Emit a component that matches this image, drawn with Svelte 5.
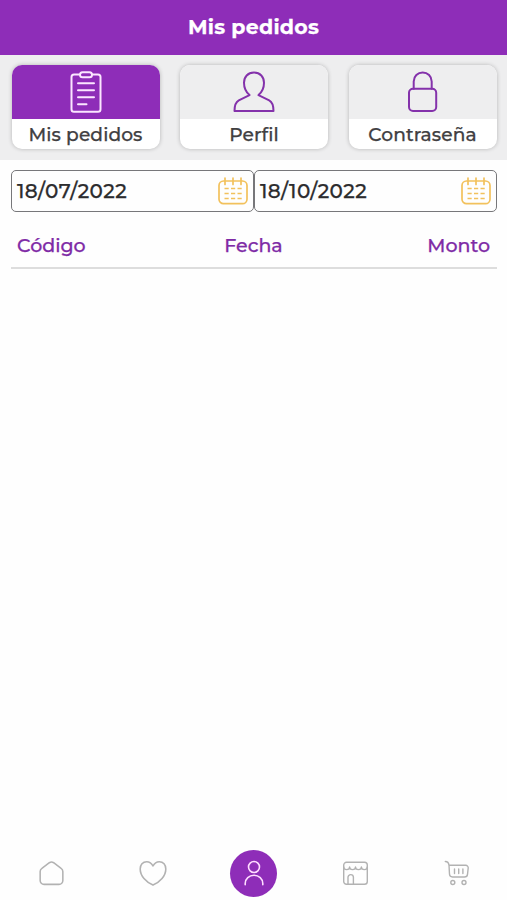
<script lang="ts">
  let activeTab = $state('pedidos');
  let from = $state('18/07/2022');
  let to = $state('18/10/2022');

  const tabs = [
    {id: 'pedidos', label: 'Mis pedidos'},
    {id: 'perfil', label: 'Perfil'},
    {id: 'clave', label: 'Contraseña'},
  ];
  const columns = ['Código', 'Fecha', 'Monto'];
</script>

{#snippet calendar()}
  <svg class="calendar" width="30" height="28" viewBox="0 0 30 28">
    <rect x="1" y="4" width="28" height="22.7" rx="4.5" />
    <path d="M7 1v6.5M15 1v6.5M23 1v6.5" />
    <path class="days" d="M6.5 11.5h4.2M13 11.5h4.2M19.5 11.5h4.2M6.5 16.5h4.2M13 16.5h4.2M19.5 16.5h4.2M6.5 21.5h4.2M13 21.5h4.2M19.5 21.5h4.2" />
  </svg>
{/snippet}

<div class="screen">
  <header><h1>Mis pedidos</h1></header>

  <div class="tabs">
    {#each tabs as tab}
      <button class="tab" class:active={activeTab === tab.id} onclick={() => activeTab = tab.id}>
        <span class="picture">
          <svg width="42" height="42" viewBox="0 0 42 42">
            {#if tab.id === 'pedidos'}
              <path d="M15 3.5H9A2.500 2.500 0 0 0 6.500 6v32.300A2.500 2.500 0 0 0 9 40.800h24a2.500 2.500 0 0 0 2.500-2.500V6A2.500 2.500 0 0 0 33 3.500h-6" />
              <rect x="15" y="1.2" width="12" height="5" rx="2.5" />
              <path d="M13 12.2h16M13 19.2h16M13 26.3h16M13 33.3h8.500" />
            {:else if tab.id === 'perfil'}
              <path d="M21 1.600C14.800 1.600 11 5.900 11 11.800c0 5 2 9.300 5.500 12.300L5.800 29.400C2.500 31.200 1.500 35 1.500 40H40.500c0-5-1-8.800-4.300-10.600L25.500 24.100C29 21.100 31 16.800 31 11.800 31 5.900 27.200 1.600 21 1.600Z" />
            {:else}
              <rect x="7" y="17.8" width="27.2" height="22.2" rx="4" />
              <path d="M11.7 17.800V10.400a9 9 0 0 1 18 0v7.400" />
            {/if}
          </svg>
        </span>
        <span class="label">{tab.label}</span>
      </button>
    {/each}
  </div>

  <main>
    <div class="dates">
      <div class="date"><span>{from}</span>{@render calendar()}</div>
      <div class="date"><span>{to}</span>{@render calendar()}</div>
    </div>
    <div class="columns">
      {#each columns as column}
        <span>{column}</span>
      {/each}
    </div>
  </main>

  <nav>
    <span>
      <svg width="25" height="25" viewBox="0 0 26 26">
        <path d="M1.200 11Q1.200 8.800 3 7.600L10.800 1.800Q13 .4 15.200 1.800L23 7.600Q24.800 8.800 24.800 11V20.300A4 4 0 0 1 20.800 24.300H5.200A4 4 0 0 1 1.200 20.300Z" />
      </svg>
    </span>
    <span>
      <svg width="28" height="26" viewBox="0 -.5 28 26">
        <path d="M14 5.500C12.500 2.500 10.300 1.200 7.700 1.200 3.700 1.200 1.200 4.500 1.200 8.500 1.200 15.500 7 21.500 14 24.600 21 21.500 26.800 15.500 26.800 8.500 26.800 4.500 24.300 1.200 20.300 1.200 17.700 1.200 15.500 2.500 14 5.500Z" />
      </svg>
    </span>
    <span class="current">
      <svg width="20" height="26" viewBox="0 0 20 26">
        <circle cx="10" cy="7" r="5.5" />
        <path d="M1.200 24.800v-1.300a8.800 8.200 0 0 1 17.600 0v1.300" />
      </svg>
    </span>
    <span>
      <svg class="thin" width="26" height="26" viewBox="-.5 -.5 26 26">
        <rect x="1.2" y="1.8" width="23.6" height="22" rx="2.8" />
        <path d="M1.200 6.500c0 3.500 5.900 3.500 5.900 0 0 3.500 5.900 3.500 5.900 0 0 3.500 5.900 3.500 5.900 0 0 3.500 5.900 3.500 5.900 0M5.500 23.800v-7a2.700 2.700 0 0 1 5.400 0v7" />
      </svg>
    </span>
    <span>
      <svg class="thin" width="26" height="26" viewBox="-1.5 -.5 26 26">
        <path d="M.8 1c2 0 3.400 1.300 3.700 3.800h16.700a2.500 2.500 0 0 1 2.500 2.700l-.7 6.300a3 3 0 0 1-3 2.700H8a3 3 0 0 1-3-2.700L4.500 4.800" />
        <path d="M10 8.500v4.500M14.200 8.500v4.500M18.400 8.500v4.500" />
        <circle cx="8.3" cy="22" r="2" />
        <circle cx="19.5" cy="22" r="2" />
      </svg>
    </span>
  </nav>
</div>

<style>
  :global(body) {
    margin: 0;
    background: #fefefe;
  }

  .screen {
    height: 100vh;
    display: flex;
    flex-direction: column;
    font-family: Montserrat, Inter, sans-serif;
    font-size: 19px;
    font-weight: 500;
    color: #414042;
    -webkit-text-stroke: .25px;
  }

  header {
    height: 54.5px;
    box-sizing: border-box;
    padding-bottom: 2px;
    display: flex;
    align-items: center;
    justify-content: center;
    background: #8e2db8;
    color: #fff;
  }

  h1 {
    margin: 0;
    font-size: 20.5px;
    font-weight: 700;
    letter-spacing: .25px;
  }

  svg {
    display: block;
    fill: none;
    stroke: currentColor;
    stroke-width: 2;
    stroke-linecap: round;
    stroke-linejoin: round;
  }

  .tabs {
    height: 84px;
    padding: 10.5px 10.5px 10.5px 11.5px;
    display: grid;
    grid-template-columns: repeat(3, 1fr);
    gap: 20.5px;
    background: #eeeeef;
  }

  .tab {
    padding: 0;
    border: 0;
    border-radius: 10px;
    overflow: hidden;
    display: flex;
    flex-direction: column;
    background: #fff;
    box-shadow: 0 0 4px rgba(0, 0, 0, .24);
    font: inherit;
    font-size: 18.6px;
    letter-spacing: .1px;
    color: #414042;
  }

  .picture {
    width: 100%;
    height: 54px;
    display: flex;
    align-items: center;
    justify-content: center;
    background: #eeeeef;
    color: #8432ab;
  }

  .active .picture {
    background: #8e2db8;
    color: #fbe6ff;
  }

  .label {
    width: 100%;
    height: 30px;
    display: flex;
    align-items: center;
    justify-content: center;
  }

  main {
    flex: 1;
    padding: 10px 10px 0 11px;
  }

  .dates {
    display: grid;
    grid-template-columns: 1fr 1fr;
  }

  .date {
    height: 42.5px;
    box-sizing: border-box;
    padding: 0 5px;
    display: flex;
    align-items: center;
    justify-content: space-between;
    border: 1.5px solid #77777a;
    border-radius: 5px;
    font-size: 20px;
    color: #2c2c2e;
    letter-spacing: .4px;
  }

  .calendar {
    color: #f2c15c;
    stroke-width: 1.7;
  }

  .calendar .days {
    stroke-width: 1.5;
    stroke-linecap: butt;
  }

  .columns {
    height: 57px;
    box-sizing: border-box;
    padding: 12px 7px 1px 6px;
    display: grid;
    grid-template-columns: repeat(3, 1fr);
    align-items: center;
    border-bottom: 2px solid #ddd;
    color: #7f2ba6;
  }

  .columns span:nth-child(2) {
    text-align: center;
  }

  .columns span:last-child {
    text-align: right;
  }

  nav {
    height: 54px;
    padding-left: 1px;
    display: grid;
    grid-template-columns: repeat(5, 1fr);
    align-items: center;
    justify-items: center;
    color: #b2b2b2;
  }

  nav svg {
    stroke-width: 1.6;
  }

  nav .thin {
    stroke-width: 1.4;
  }

  .current {
    width: 47px;
    height: 47px;
    display: flex;
    align-items: center;
    justify-content: center;
    border-radius: 50%;
    background: #8e2db8;
    color: #ffdcff;
  }
</style>
